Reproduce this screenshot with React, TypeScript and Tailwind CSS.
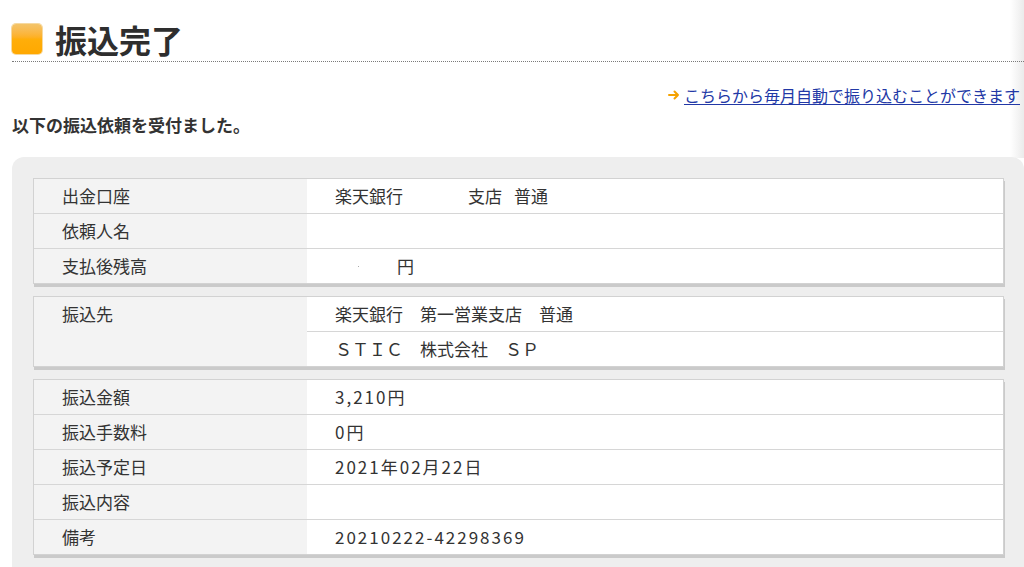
import { type ReactNode } from "react";

type Row = { label: string; value?: ReactNode; num?: boolean };

const GROUP1: Row[] = [
  {
    label: "出金口座",
    value: (
      <>
        楽天銀行<span className="ml-[65px]">支店</span>
        <span className="ml-[12px]">普通</span>
      </>
    ),
  },
  { label: "依頼人名" },
  {
    label: "支払後残高",
    value: (
      <>
        <span className="inline-block w-[1px] h-[1px] bg-[#aaa] ml-[23px] align-[-4px]" />
        <span className="ml-[38px]">円</span>
      </>
    ),
  },
];

const GROUP3: Row[] = [
  { label: "振込金額", value: "3,210円", num: true },
  { label: "振込手数料", value: "0円", num: true },
  { label: "振込予定日", value: "2021年02月22日", num: true },
  { label: "振込内容" },
  { label: "備考", value: "20210222-42298369", num: true },
];

const FONT = "font-['Noto_Sans_CJK_JP','Noto_Sans',sans-serif]";

export default function App() {
  return (
    <div className={`relative w-[1024px] h-[567px] overflow-hidden bg-white text-[#333] ${FONT}`}>
      {/* right edge shade */}
      <div className="pointer-events-none absolute top-0 right-0 w-[14px] h-[158px] bg-gradient-to-r from-transparent to-[#ebebeb]" />

      {/* Title */}
      <div className="relative ml-3 h-[62px] pt-[23px] border-b border-dotted border-[#7a7a7a] flex items-start gap-[13px]">
        <span className="mt-[1px] w-[30px] h-[30px] rounded-[4px] bg-gradient-to-b from-[#f3c46a] via-[#ffae0a] to-[#ffa800] shadow-[0_0_0_1px_#f6d9a0]" />
        <h1 className="text-[32px] font-bold leading-[34px] -mt-[1px] text-[#2e2e2e]">振込完了</h1>
      </div>

      {/* Link */}
      <div className="relative mt-[23px] pr-[4px] h-5 flex items-center justify-end gap-[4px]">
        <IcoArrow className="w-[12px] h-[10px]" />
        <a href="#" className="text-[16px] leading-5 text-[#2238a6] underline underline-offset-[2px]">
          こちらから毎月自動で振り込むことができます
        </a>
      </div>

      <p className="relative mt-[10px] ml-3 text-[17px] leading-5 font-bold">以下の振込依頼を受付ました。</p>

      {/* Panel */}
      <div className="relative mt-[22px] ml-3 rounded-t-[12px] bg-[#eeeeee] pt-[21px] pl-[21px] pr-[20px] pb-10">
        <Group rows={GROUP1} />

        <div className="mb-[12px] flex border border-[#d2d2d2] shadow-[1px_3px_0_#cacaca] text-[17px]">
          <div className="w-[273px] bg-[#f3f3f3] pl-[28px]">
            <div className="h-[34px] flex items-center">振込先</div>
          </div>
          <div className="flex-1 bg-white">
            <div className="h-[34px] pl-[28px] flex items-center">楽天銀行　第一営業支店　普通</div>
            <div className="h-[35px] pl-[28px] flex items-center border-t border-[#d6d6d6]">ＳＴＩＣ　株式会社　ＳＰ</div>
          </div>
        </div>

        <Group rows={GROUP3} />
      </div>
    </div>
  );
}

function Group({ rows }: { rows: Row[] }) {
  return (
    <div className="mb-[12px] border border-[#d2d2d2] shadow-[1px_3px_0_#cacaca] text-[17px]">
      {rows.map((r, i) => (
        <div key={r.label} className={`flex h-[34px] ${i > 0 ? "box-content border-t border-[#d6d6d6]" : ""}`}>
          <div className="w-[273px] bg-[#f3f3f3] pl-[28px] flex items-center">{r.label}</div>
          <div className={`flex-1 bg-white pl-[28px] flex items-center ${r.num ? "tracking-[2px]" : ""}`}>
            {r.value}
          </div>
        </div>
      ))}
    </div>
  );
}

function IcoArrow(p: { className?: string }) {
  return (
    <svg className={p.className} viewBox="0 0 12 10" fill="none" stroke="#f5a200" strokeWidth="2" strokeLinecap="round" strokeLinejoin="round">
      <path d="M1 5h9M6.5 1.5L10 5l-3.5 3.5" />
    </svg>
  );
}
